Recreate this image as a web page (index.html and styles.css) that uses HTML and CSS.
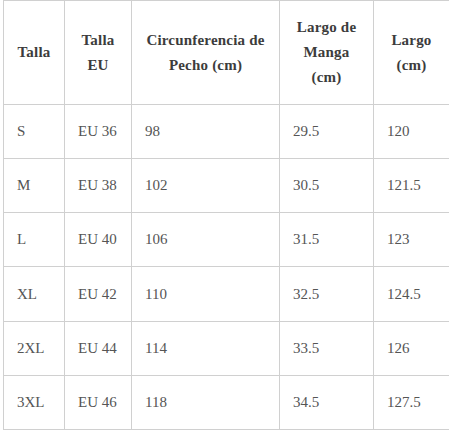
FILE: index.html
```html
<!DOCTYPE html>
<html lang="es">
<head>
<meta charset="utf-8">
<link rel="stylesheet" href="styles.css">
</head>
<body>
<table class="size-table">
  <colgroup>
    <col class="c1"><col class="c2"><col class="c3"><col class="c4"><col class="c5">
  </colgroup>
  <thead>
    <tr>
      <th>Talla</th>
      <th>Talla<br>EU</th>
      <th>Circunferencia de<br>Pecho (cm)</th>
      <th>Largo de<br>Manga<br>(cm)</th>
      <th>Largo<br>(cm)</th>
    </tr>
  </thead>
  <tbody>
    <tr><td>S</td><td>EU 36</td><td>98</td><td>29.5</td><td>120</td></tr>
    <tr><td>M</td><td>EU 38</td><td>102</td><td>30.5</td><td>121.5</td></tr>
    <tr><td>L</td><td>EU 40</td><td>106</td><td>31.5</td><td>123</td></tr>
    <tr><td>XL</td><td>EU 42</td><td>110</td><td>32.5</td><td>124.5</td></tr>
    <tr><td>2XL</td><td>EU 44</td><td>114</td><td>33.5</td><td>126</td></tr>
    <tr><td>3XL</td><td>EU 46</td><td>118</td><td>34.5</td><td>127.5</td></tr>
  </tbody>
</table>
</body>
</html>
```
FILE: styles.css
```css
html, body {
  margin: 0;
  padding: 0;
  background: #fff;
  overflow: hidden;
}
body {
  padding-left: 3px;
  font-family: "Liberation Serif", "Times New Roman", serif;
  font-size: 15px;
  color: #555;
}
.size-table {
  border-collapse: collapse;
  table-layout: fixed;
  width: 446px;
}
.c1 { width: 61px; }
.c2 { width: 67px; }
.c3 { width: 148px; }
.c4 { width: 94px; }
.c5 { width: 76px; }
.size-table th,
.size-table td {
  border: 1px solid #d0d0d0;
  line-height: 25px;
  padding: 14px 12px 14px 13px;
  vertical-align: middle;
}
.size-table th {
  font-weight: bold;
  text-align: center;
  color: #3c3c3c;
  letter-spacing: 0.2px;
  height: 75px;
  padding-left: 12px;
  padding-right: 12px;
}
.size-table td {
  text-align: left;
  height: 25.17px;
}
```
